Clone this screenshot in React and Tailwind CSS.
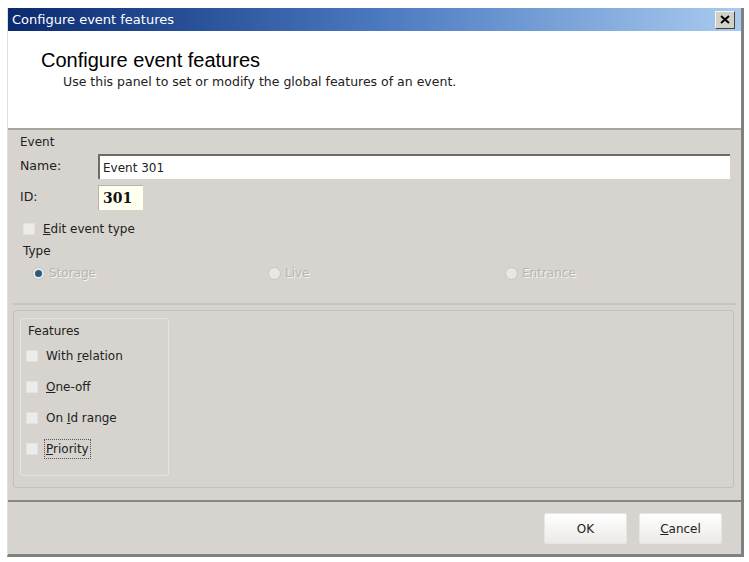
import { useState } from "react";

const ui = { fontFamily: '"DejaVu Sans", Verdana, sans-serif' };

function Check({ label, hotkey, focused }) {
  const [on, setOn] = useState(false);
  const i = label.indexOf(hotkey);
  return (
    <label className="flex h-[20px] items-center gap-[6px] text-[12px] text-[#222]">
      <span
        onClick={() => setOn(!on)}
        className="flex h-[12px] w-[12px] items-center justify-center border border-[#e4e2dc] bg-[#eeece8]"
      >
        {on && <span className="text-[10px] leading-none">✓</span>}
      </span>
      <span className={focused ? "border border-dotted border-[#555] px-px" : "border border-transparent px-px"}>
        {label.slice(0, i)}
        <span className="underline">{hotkey}</span>
        {label.slice(i + 1)}
      </span>
    </label>
  );
}

function Radio({ label, checked }) {
  return (
    <div className="flex items-center gap-[4px] text-[12px]">
      <span className="flex h-[13px] w-[13px] items-center justify-center rounded-full border border-[#c9c6c0] bg-[#e9e7e3]">
        {checked && <span className="h-[7px] w-[7px] rounded-full bg-[#2a5c80]" />}
      </span>
      <span className="text-[#b8b5ae] [text-shadow:1px_1px_0_#f4f3f0]">{label}</span>
    </div>
  );
}

export default function App() {
  const [name, setName] = useState("Event 301");

  return (
    <div className="h-[562px] w-[749px] bg-white pl-[7px] pt-[8px]" style={ui}>
      <div className="flex h-[549px] w-[737px] flex-col border-r-[3px] border-b-[3px] border-l border-[#808080] border-l-[#e0e0e0] bg-[#d7d4cf]">
        {/* title bar */}
        <div className="flex h-[23px] items-center justify-between bg-gradient-to-r from-[#0b2a70] via-[#4a78bf] to-[#a9cbef] pl-[4px] pr-[6px]">
          <span className="text-[13px] text-white">Configure event features</span>
          <button
            type="button"
            aria-label="Close"
            className="flex h-[18px] w-[20px] items-center justify-center border border-[#f4f4f4] border-r-[#404040] border-b-[#404040] bg-[#d4d0c8]"
          >
            <svg width="10" height="9" viewBox="0 0 10 9">
              <path d="M1 1 L9 8 M9 1 L1 8" stroke="#000" strokeWidth="2" />
            </svg>
          </button>
        </div>

        {/* header */}
        <div className="h-[99px] border-b-2 border-[#a8a59f] bg-white pl-[33px] pt-[16px]">
          <h1 className="text-[20px] leading-[26px] text-black" style={{ fontFamily: '"Liberation Sans", Arial, sans-serif' }}>
            Configure event features
          </h1>
          <p className="pl-[22px] text-[12.5px] leading-[18px] text-[#222]">
            Use this panel to set or modify the global features of an event.
          </p>
        </div>

        {/* body */}
        <div className="flex flex-1 flex-col px-[5px] pt-[4px]">
          <div className="pl-[7px] text-[12px] leading-[16px] text-[#222]">Event</div>

          <div className="mt-[4px] flex items-center pl-[7px]">
            <span className="w-[78px] text-[12.5px] text-[#222]">Name:</span>
            <input
              value={name}
              onChange={(e) => setName(e.target.value)}
              className="h-[25px] flex-1 border-t-2 border-l-2 border-[#6e6b66] bg-white px-[3px] text-[12px] text-[#222] outline-none"
              style={ui}
            />
            <span className="w-[6px]" />
          </div>

          <div className="mt-[6px] flex items-center pl-[7px]">
            <span className="w-[78px] text-[12.5px] text-[#222]">ID:</span>
            <span
              className="flex h-[25px] w-[45px] items-center border-t border-l border-[#b6b3ad] bg-[#fffff0] pl-[4px] text-[14px] font-bold text-[#111]"
              style={{ fontFamily: '"DejaVu Serif", "Liberation Serif", serif' }}
            >
              301
            </span>
          </div>

          <div className="mt-[9px] pl-[10px]">
            <Check label="Edit event type" hotkey="E" />
          </div>

          {/* type group */}
          <div className="border-b-2 border-[#c7c4be] pb-[21px] pl-[10px]">
            <div className="mt-[3px] text-[12px] leading-[18px] text-[#222]">Type</div>
            <div className="mt-[4px] grid grid-cols-[236px_237px_1fr] pl-[9px]">
              <Radio label="Storage" checked />
              <Radio label="Live" />
              <Radio label="Entrance" />
            </div>
          </div>

          {/* features group */}
          <div className="mt-[5px] mr-[2px] h-[178px] rounded-[3px] border border-[#c4c1bb] px-[6px] pt-[7px]">
            <div className="flex h-[158px] w-[149px] flex-col rounded-[3px] border border-[#e6e4df] pl-[5px] pt-[3px]">
              <div className="pl-[2px] text-[12px] leading-[18px] text-[#222]">Features</div>
              <div className="mt-[6px] flex flex-col gap-[11px]">
                <Check label="With relation" hotkey="r" />
                <Check label="One-off" hotkey="O" />
                <Check label="On Id range" hotkey="I" />
                <Check label="Priority" hotkey="P" focused />
              </div>
            </div>
          </div>

          {/* footer */}
          <div className="mt-[12px] -mx-[5px] flex flex-1 items-start justify-end gap-[12px] border-t-2 border-[#8a8782] pr-[19px] pt-[11px]">
            <button
              type="button"
              className="h-[31px] w-[83px] rounded-[2px] border border-[#e8e6e2] bg-gradient-to-b from-white to-[#eceae6] text-[12px] text-[#222]"
            >
              OK
            </button>
            <button
              type="button"
              className="h-[31px] w-[83px] rounded-[2px] border border-[#e8e6e2] bg-gradient-to-b from-white to-[#eceae6] text-[12px] text-[#222]"
            >
              <span className="underline">C</span>ancel
            </button>
          </div>
        </div>
      </div>
    </div>
  );
}
